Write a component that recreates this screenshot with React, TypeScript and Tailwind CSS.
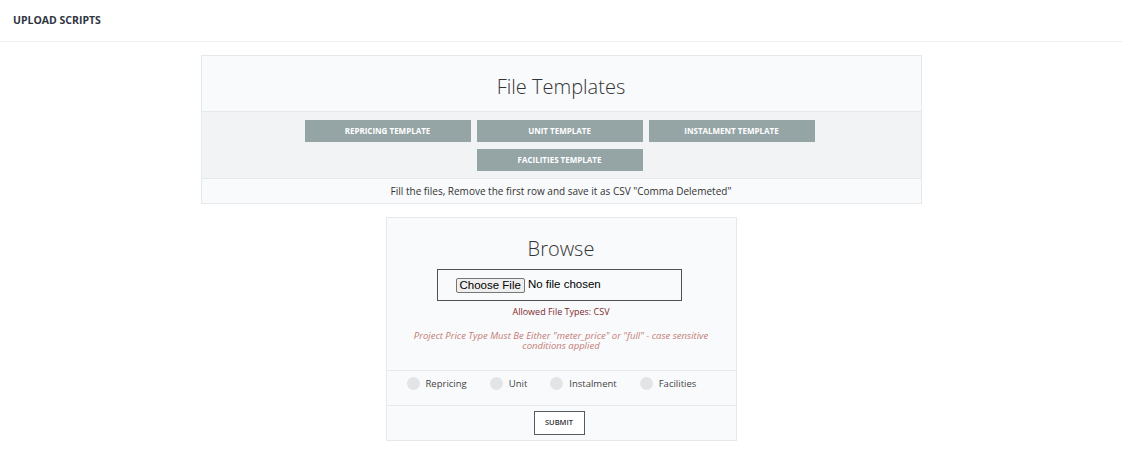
import React from "react";

const Radio = ({ label }: { label: string }) => (
  <label className="flex items-center gap-[6px]">
    <span className="w-[13px] h-[13px] rounded-full bg-[#e3e4e6] inline-block" />
    <span className="text-[9.5px] text-[#444]">{label}</span>
  </label>
);

export default function App() {
  return (
    <div className="w-[1122px] h-[462px] bg-white font-['Open_Sans',sans-serif] text-[#333]">
      <div className="h-[42px] border-b border-[#eceef0] flex items-center pl-[13px]">
        <span className="text-[10.5px] font-bold text-[#2f3640]">UPLOAD SCRIPTS</span>
      </div>
      <div className="w-[721px] mx-auto mt-[13px] border border-[#e6e9ec] bg-[#f9fafb]">
        <div className="h-[56px] flex items-center justify-center border-b border-[#e6e9ec]">
          <span className="text-[20px] font-light text-[#333] pt-[6px]">File Templates</span>
        </div>
        <div className="bg-[#f2f3f5] pt-[8px] pb-[7px] border-b border-[#e6e9ec]">
          <div className="w-[512px] ml-[102px] flex flex-wrap justify-center gap-x-[6px] gap-y-[7px]">
            {["REPRICING TEMPLATE", "UNIT TEMPLATE", "INSTALMENT TEMPLATE", "FACILITIES TEMPLATE"].map((t) => (
              <div key={t} className="w-[166px] h-[22px] bg-[#95a5a6] text-white text-[8px] font-bold flex items-center justify-center">
                {t}
              </div>
            ))}
          </div>
        </div>
        <div className="h-[24px] flex items-center justify-center text-[10px] text-[#333] pt-[1px]">
          Fill the files, Remove the first row and save it as CSV "Comma Delemeted"
        </div>
      </div>
      <div className="w-[351px] mx-auto mt-[13px] border border-[#e6e9ec] bg-[#f9fafb]">
        <div className="flex flex-col items-center border-b border-[#e6e9ec] pb-[19px]">
          <div className="text-[20px] font-light text-[#333] mt-[17px] leading-[28px]">Browse</div>
          <div className="w-[245px] h-[32px] mt-[6px] mr-[4px] border border-[#4c5358] flex items-center pl-[18px] font-['Liberation_Sans',sans-serif]">
            <span className="h-[15px] px-[3px] border border-[#767676] bg-[#efefef] rounded-[2px] text-[11.5px] leading-[13px] text-black">Choose File</span>
            <span className="ml-[3px] text-[11.5px] text-black">No file chosen</span>
          </div>
          <div className="text-[9px] text-[#7e2a2e] mt-[4px]">Allowed File Types: CSV</div>
          <div className="text-[9.5px] italic text-[#c47c78] text-center w-[310px] leading-[10px] mt-[12px]">
            Project Price Type Must Be Either "meter_price" or "full" - case sensitive conditions applied
          </div>
        </div>
        <div className="h-[35px] flex items-start pt-[6px] pl-[20px] gap-[23px] border-b border-[#e6e9ec]">
          <Radio label="Repricing" />
          <Radio label="Unit" />
          <Radio label="Instalment" />
          <Radio label="Facilities" />
        </div>
        <div className="h-[34px] flex items-start pt-[5px] justify-center">
          <div className="w-[51px] h-[24px] -ml-[4px] border border-[#555b60] flex items-center justify-center text-[7.5px] font-semibold text-[#333] bg-white">
            SUBMIT
          </div>
        </div>
      </div>
    </div>
  );
}
